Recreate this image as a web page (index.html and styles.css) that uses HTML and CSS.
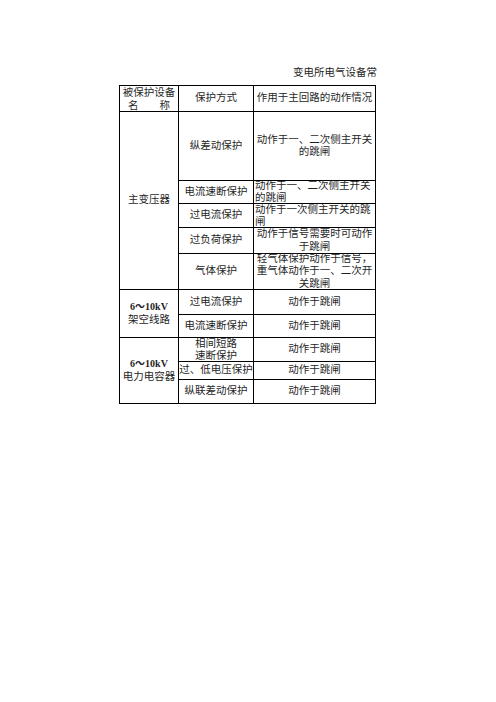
FILE: index.html
```html
<!DOCTYPE html>
<html lang="zh">
<head>
<meta charset="utf-8">
<title>变电所电气设备常</title>
<link rel="stylesheet" href="styles.css">
</head>
<body>
<div class="page">
  <div class="title">变电所电气设备常</div>
  <div class="grid">
    <div class="cell hdr1"><span>被保护设备<br>名　　称</span></div>
    <div class="cell"><span>保护方式</span></div>
    <div class="cell"><span>作用于主回路的动作情况</span></div>

    <div class="cell span5"><span>主变压器</span></div>
    <div class="cell"><span>纵差动保护</span></div>
    <div class="cell"><span>动作于一、二次侧主开关<br>的跳闸</span></div>

    <div class="cell"><span>电流速断保护</span></div>
    <div class="cell left"><span>动作于一、二次侧主开关的跳闸</span></div>

    <div class="cell"><span>过电流保护</span></div>
    <div class="cell left"><span>动作于一次侧主开关的跳闸</span></div>

    <div class="cell"><span>过负荷保护</span></div>
    <div class="cell"><span>动作于信号需要时可动作于跳闸</span></div>

    <div class="cell"><span>气体保护</span></div>
    <div class="cell"><span>轻气体保护动作于信号，重气体动作于一、二次开关跳闸</span></div>

    <div class="cell span2"><span><b class="latin">6～10kV</b><br>架空线路</span></div>
    <div class="cell"><span>过电流保护</span></div>
    <div class="cell"><span>动作于跳闸</span></div>

    <div class="cell"><span>电流速断保护</span></div>
    <div class="cell"><span>动作于跳闸</span></div>

    <div class="cell span3"><span><b class="latin">6～10kV</b><br>电力电容器</span></div>
    <div class="cell tight"><span>相间短路<br>速断保护</span></div>
    <div class="cell"><span>动作于跳闸</span></div>

    <div class="cell nowrap"><span>过、低电压保护</span></div>
    <div class="cell"><span>动作于跳闸</span></div>

    <div class="cell"><span>纵联差动保护</span></div>
    <div class="cell"><span>动作于跳闸</span></div>
  </div>
</div>
</body>
</html>
```

FILE: styles.css
```css
html, body {
  margin: 0;
  padding: 0;
  background: #fff;
}
body {
  font-family: "Liberation Serif", "Noto Sans CJK SC", serif;
  color: #1f1f1f;
  font-size: 10.5px;
}
.page {
  padding: 66px 0 0 119px;
}
.title {
  width: 258px;
  height: 14px;
  line-height: 14px;
  text-align: right;
  margin-bottom: 5px;
}
.grid {
  display: grid;
  width: 255px;
  grid-template-columns: 58px 74px 121px;
  grid-template-rows: 25px 68px 22px 23px 25px 35px 24px 22px 23px 17px 23px;
  gap: 1px;
  padding: 1px;
  background: #000;
}
.cell {
  background: #fff;
  display: flex;
  align-items: center;
  justify-content: center;
  text-align: center;
  line-height: 12.5px;
  padding: 0 1px;
  overflow: visible;
  min-width: 0;
}
.cell > span {
  display: block;
  min-width: 0;
}
.hdr1 {
  line-height: 13px;
}
.left {
  justify-content: flex-start;
  text-align: left;
  line-height: 12px;
}
.left > span {
  width: 100%;
}
.tight {
  line-height: 11.5px;
}
.nowrap {
  white-space: nowrap;
  padding: 0;
}
.span5 {
  grid-row: span 5;
}
.span2 {
  grid-row: span 2;
}
.span3 {
  grid-row: span 3;
}
.latin {
  font-weight: bold;
  font-size: 10px;
}
```
